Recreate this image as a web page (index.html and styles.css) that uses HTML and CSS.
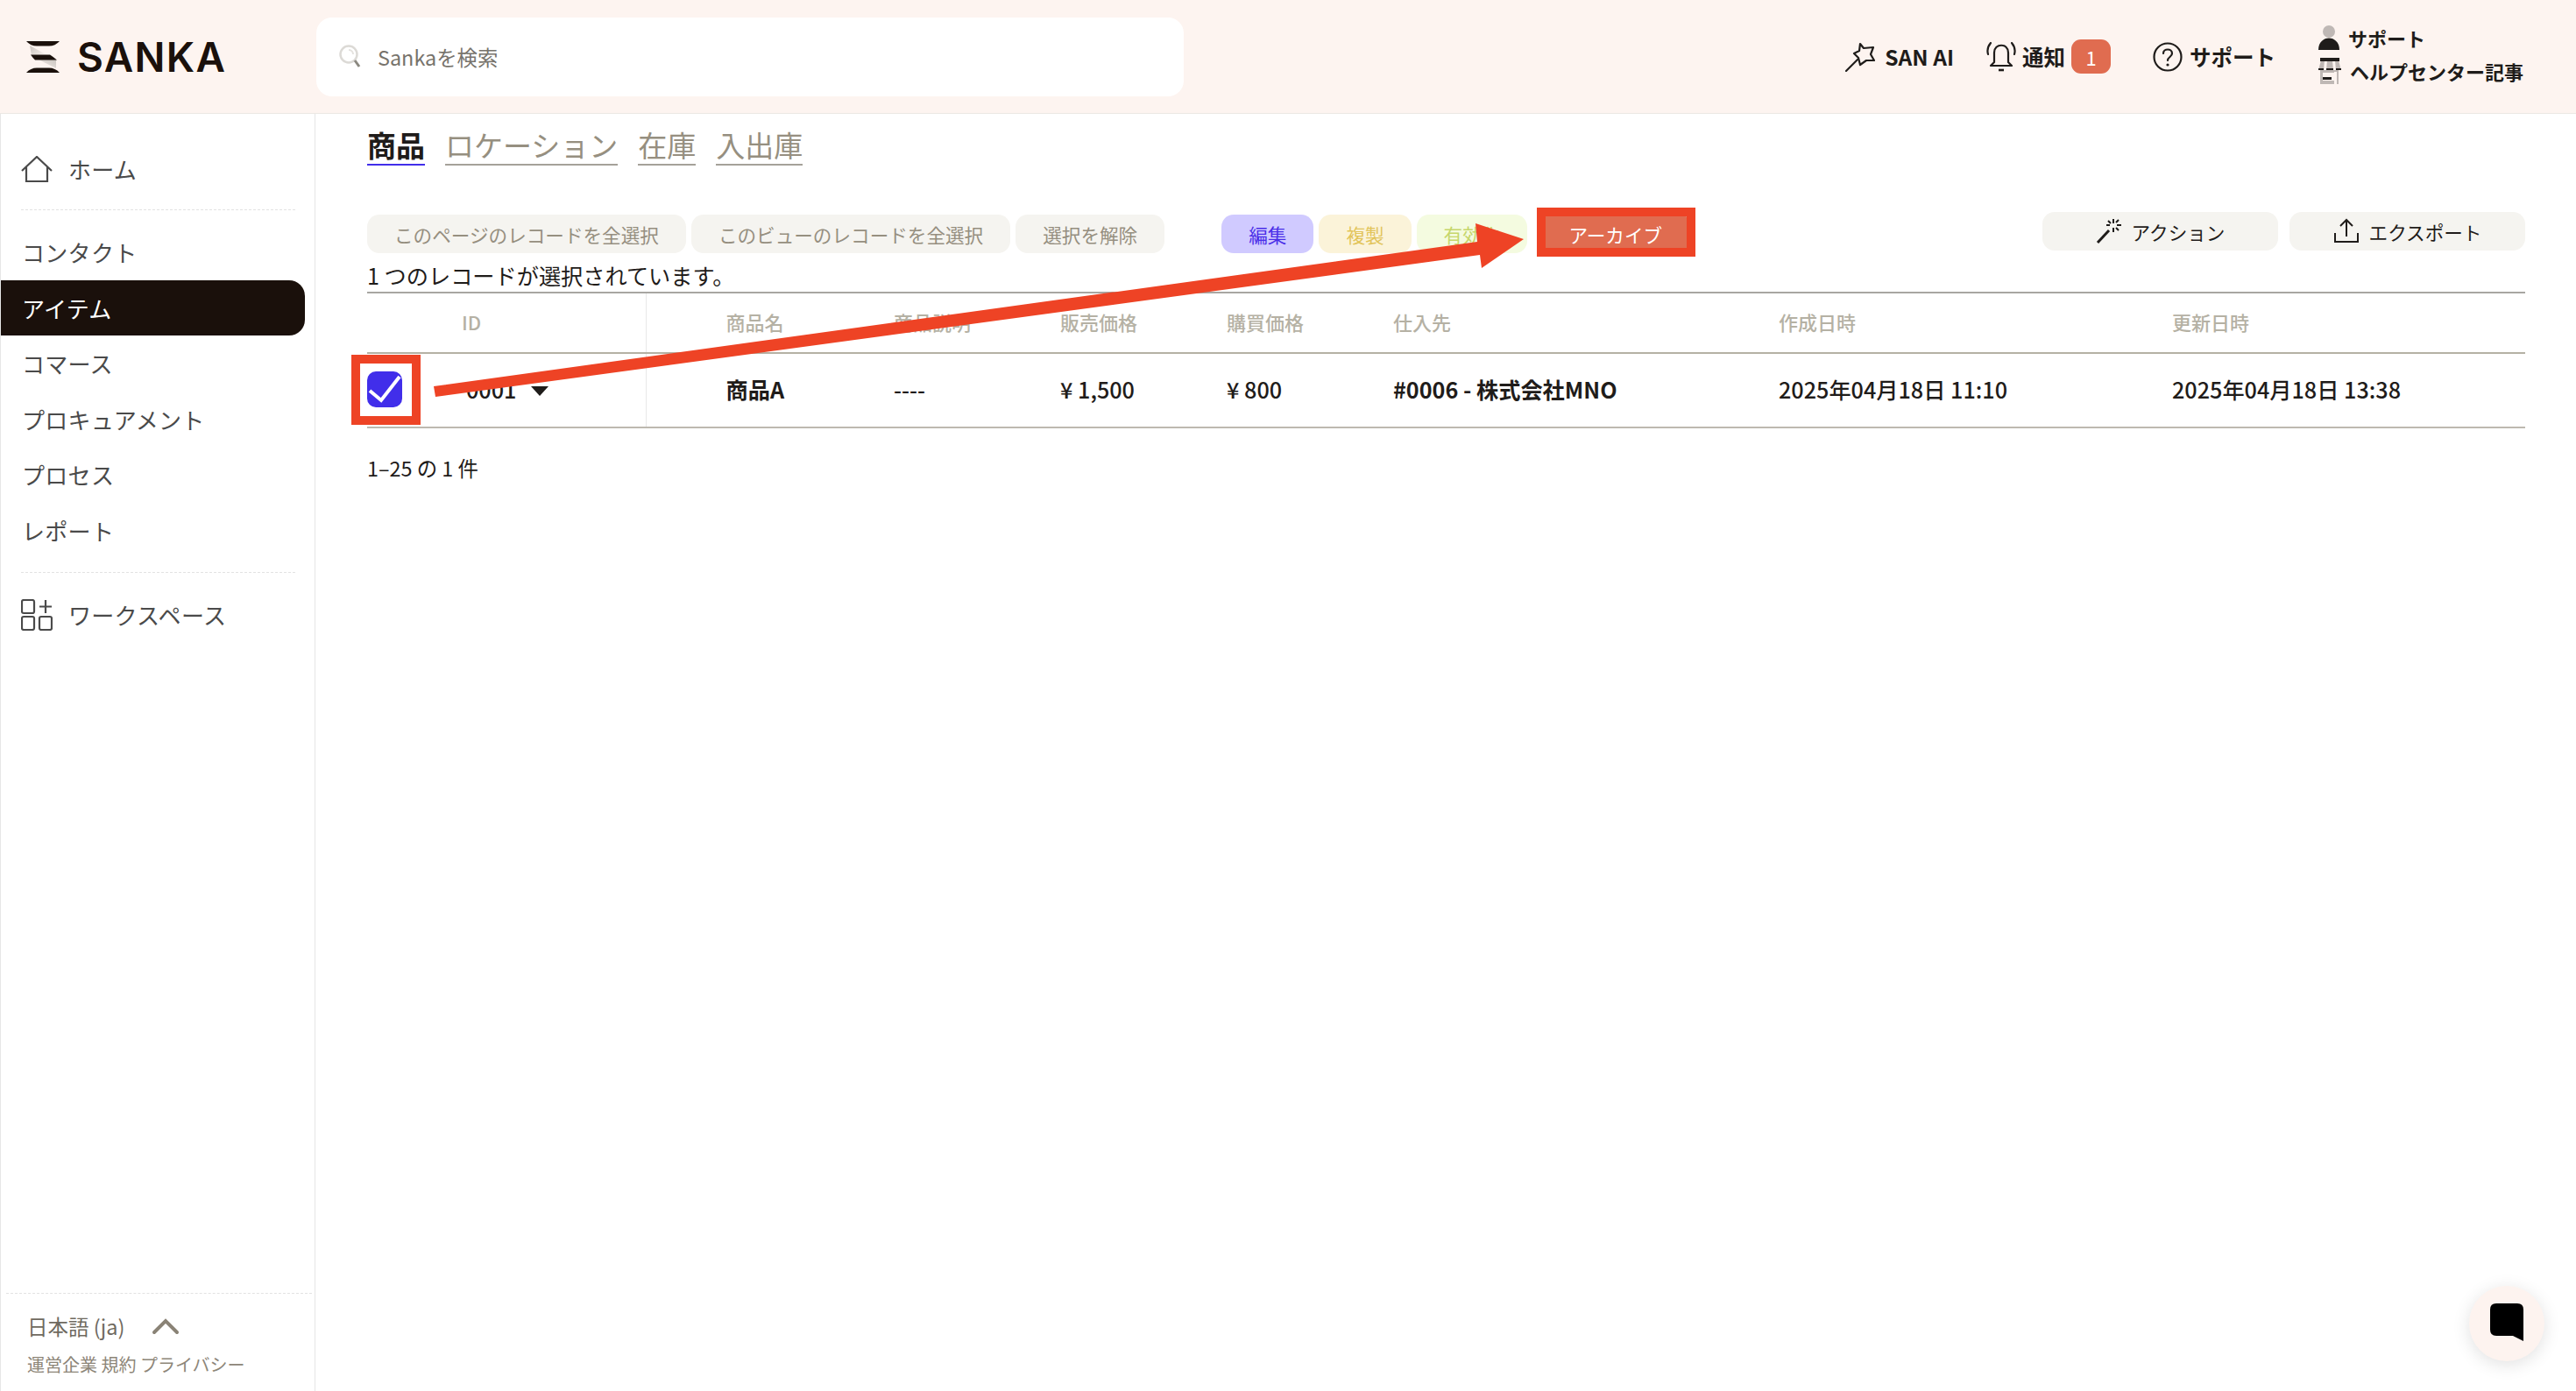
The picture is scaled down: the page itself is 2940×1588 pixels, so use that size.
FILE: index.html
```html
<!DOCTYPE html>
<html lang="ja">
<head>
    <meta charset="UTF-8">
    <meta name="viewport" content="width=device-width, initial-scale=1.0">
    <title>Sanka</title>
    <link rel="stylesheet" href="styles.css">
</head>
<body>
    <header class="topbar">
        <div class="brand">
            <svg class="brand-mark" width="38" height="36" viewBox="0 0 38 36">
                <defs>
                    <linearGradient id="fade" x1="0" y1="0" x2="1" y2="0.600">
                        <stop offset="0" stop-color="#c9c4bf"/>
                        <stop offset="1" stop-color="#f6eeea"/>
                    </linearGradient>
                    <linearGradient id="fade2" x1="1" y1="0" x2="0" y2="1">
                        <stop offset="0" stop-color="#c9c4bf"/>
                        <stop offset="1" stop-color="#f6eeea"/>
                    </linearGradient>
                </defs>
                <path d="M4 5 L24 16 H6 Z" fill="url(#fade)"/>
                <path d="M14 21 H34 L34 31 Z" fill="url(#fade2)"/>
                <path d="M0 0 H38 Q33 5.500 26 5.500 H12 Q5 5.500 0 0 Z" fill="#1a100b"/>
                <path d="M5 15.500 H27 Q31 18 35 21.500 H10 Q7 18.500 5 15.500 Z" fill="#1a100b"/>
                <path d="M12 30.500 H26 Q33 30.500 38 36 H0 Q5 30.500 12 30.500 Z" fill="#1a100b"/>
            </svg>
            <span class="brand-name">SANKA</span>
        </div>
        <div class="search">
            <svg width="26" height="28" viewBox="0 0 26 28" fill="none">
                <circle cx="11" cy="11" r="9.500" stroke="#dcdad6" stroke-width="2.500"/>
                <path d="M11 6 A5 5 0 0 1 16 11" stroke="#e4e2de" stroke-width="2"/>
                <path d="M18 18 L23 25" stroke="#8b8880" stroke-width="3"/>
            </svg>
            <span>Sankaを検索</span>
        </div>
        <nav class="top-links">
            <a class="top-link link-ai">
                <svg width="34" height="34" viewBox="0 0 34 34" fill="none" stroke="#1f1c1a" stroke-width="2.200" stroke-linejoin="round">
                    <path d="M17 2 L21 7 L32 6 L29 14 L33 21 L24 21 L17 26 L15 18 L10 13 L16 10 Z"/>
                    <path d="M14 20 L1 33" stroke-linecap="round"/>
                </svg>
                <span>SAN AI</span>
            </a>
            <a class="top-link link-bell">
                <svg width="34" height="34" viewBox="0 0 34 34" fill="none" stroke="#1f1c1a" stroke-width="2.200">
                    <path d="M9 23 V12 C9 1 25 1 25 12 V23 L29 27 H5 Z" stroke-linejoin="round"/>
                    <path d="M5 1 Q0 7 2 14 M29 1 Q34 7 32 14" stroke-linecap="round"/>
                    <path d="M14 32 H20" stroke-width="2.600"/>
                </svg>
                <span>通知</span>
                <span class="badge">1</span>
            </a>
            <a class="top-link link-help">
                <svg width="34" height="34" viewBox="0 0 34 34" fill="none" stroke="#1f1c1a" stroke-width="2.200">
                    <circle cx="17" cy="17" r="15.500"/>
                    <path d="M12 13 C12 7 22 7 22 13 C22 17 17 17 17 21" stroke-linecap="round"/>
                    <circle cx="17" cy="26" r="1.600" fill="#1f1c1a" stroke="none"/>
                </svg>
                <span>サポート</span>
            </a>
            <div class="top-stack">
                <a class="stack-row">
                    <svg width="26" height="28" viewBox="0 0 26 28">
                        <circle cx="13" cy="7" r="7" fill="#bfb8b5"/>
                        <path d="M1 28 C1 10 25 10 25 28 Z" fill="#1f1c1a"/>
                    </svg>
                    <span>サポート</span>
                </a>
                <a class="stack-row">
                    <svg width="28" height="30" viewBox="0 0 28 30">
                        <path d="M4 3 L1 14 H27 L24 3 Z M3 14 H24 V30 H3 Z" fill="#bfb8b5"/>
                        <path d="M6 17 H19 V26 H6 Z" fill="#fdf4f0"/>
                        <path d="M8 3 L7 14 H10 L11 3 Z M17 3 L18 14 H21 L20 3 Z M19 16 H22 V30 H19 Z" fill="#fdf4f0"/>
                        <path d="M3 0 H25 V4 H3 Z M1 12 H7 V14 H1 Z M10 12 H18 V14 H10 Z M21 12 H27 V14 H21 Z M6 22 H16 V25 H6 Z" fill="#1f1c1a"/>
                    </svg>
                    <span>ヘルプセンター記事</span>
                </a>
            </div>
        </nav>
    </header>

    <div class="layout">
        <aside class="sidebar">
            <a class="nav-main nav-home">
                <svg width="36" height="30" viewBox="0 0 36 30" fill="none" stroke="#4a4a4a" stroke-width="2.200">
                    <path d="M1 17 L18 1 L35 17"/>
                    <path d="M6 13 V29 H30 V13"/>
                </svg>
                <span>ホーム</span>
            </a>
            <div class="nav-line"></div>
            <ul class="nav-list">
                <li class="nav-item">コンタクト</li>
                <li class="nav-item active">アイテム</li>
                <li class="nav-item">コマース</li>
                <li class="nav-item">プロキュアメント</li>
                <li class="nav-item">プロセス</li>
                <li class="nav-item">レポート</li>
            </ul>
            <div class="nav-line"></div>
            <a class="nav-main nav-work">
                <svg width="36" height="36" viewBox="0 0 36 36" fill="none" stroke="#4a4a4a" stroke-width="2.200">
                    <rect x="1" y="1" width="14" height="15" rx="2"/>
                    <rect x="1" y="20" width="14" height="15" rx="2"/>
                    <rect x="21" y="20" width="14" height="15" rx="2"/>
                    <path d="M28 1 V16 M21 8.500 H35"/>
                </svg>
                <span>ワークスペース</span>
            </a>
            <div class="side-footer">
                <div class="lang">
                    <span>日本語 (ja)</span>
                    <svg width="32" height="20" viewBox="0 0 32 20" fill="none" stroke="#8a8376" stroke-width="4" stroke-linecap="round">
                        <path d="M3 17 L16 4 L29 17"/>
                    </svg>
                </div>
                <div class="legal">運営企業 規約 プライバシー</div>
            </div>
        </aside>

        <main class="content">
            <div class="tabs">
                <a class="tab current">商品</a>
                <a class="tab">ロケーション</a>
                <a class="tab">在庫</a>
                <a class="tab">入出庫</a>
            </div>

            <div class="toolbar">
                <div class="btn-group">
                    <button class="btn">このページのレコードを全選択</button>
                    <button class="btn">このビューのレコードを全選択</button>
                    <button class="btn">選択を解除</button>
                    <button class="btn btn-edit">編集</button>
                    <button class="btn btn-copy">複製</button>
                    <button class="btn btn-enable">有効化</button>
                    <button class="btn btn-archive">アーカイブ</button>
                </div>
                <div class="btn-right">
                    <button class="btn-tool">
                        <svg width="30" height="30" viewBox="0 0 30 30" fill="none" stroke="#1f1c1a" stroke-width="2">
                            <path d="M2 28 L15 14" stroke-width="3"/>
                            <path d="M20 1 V6 M20 11 V16 M12 8 H16 M24 8 H29 M14 3 L17 6 M26 2 L23 5 M26 14 L23 11"/>
                        </svg>
                        <span>アクション</span>
                    </button>
                    <button class="btn-tool">
                        <svg width="30" height="30" viewBox="0 0 30 30" fill="none" stroke="#1f1c1a" stroke-width="2">
                            <path d="M15 21 V2 M8 9 L15 2 L22 9"/>
                            <path d="M2 17 V27 H28 V17"/>
                        </svg>
                        <span>エクスポート</span>
                    </button>
                </div>
            </div>

            <div class="selected-note">1 つのレコードが選択されています。</div>

            <table class="records">
                <colgroup>
                    <col class="col-check">
                    <col class="col-id">
                    <col class="col-name">
                    <col class="col-price">
                    <col class="col-price">
                    <col class="col-price">
                    <col class="col-supplier">
                    <col class="col-date">
                    <col>
                </colgroup>
                <thead>
                    <tr>
                        <th></th>
                        <th class="cell-id">ID</th>
                        <th class="cell-name">商品名</th>
                        <th>商品説明</th>
                        <th>販売価格</th>
                        <th>購買価格</th>
                        <th>仕入先</th>
                        <th>作成日時</th>
                        <th>更新日時</th>
                    </tr>
                </thead>
                <tbody>
                    <tr>
                        <td><span class="check"><svg width="40" height="41" viewBox="0 0 40 41" fill="none" stroke="#fff" stroke-width="4"><path d="M3 22 L16 33 L37 6"/></svg></span></td>
                        <td class="cell-id cell-code">0001 <span class="caret"></span></td>
                        <td class="cell-name strong">商品A</td>
                        <td>----</td>
                        <td>¥ 1,500</td>
                        <td>¥ 800</td>
                        <td class="strong">#0006 - 株式会社MNO</td>
                        <td>2025年04月18日 11:10</td>
                        <td>2025年04月18日 13:38</td>
                    </tr>
                </tbody>
            </table>

            <div class="pager">1–25 の 1 件</div>
        </main>
    </div>

    <!-- annotations drawn on top of the screenshot -->
    <div class="mark mark-check"></div>
    <div class="mark mark-archive"></div>
    <svg class="arrow" width="2940" height="1588" viewBox="0 0 2940 1588">
        <path d="M495 441 L1686 276 L1684 255 L1739 273 L1691 306 L1689 291 L497 453 Z" fill="#ee4325"/>
    </svg>

    <button class="chat">
        <svg width="38" height="44" viewBox="0 0 38 44">
            <path d="M7 0 H31 Q38 0 38 7 V43 L26 37 H7 Q0 37 0 30 V7 Q0 0 7 0 Z" fill="#000"/>
        </svg>
    </button>
</body>
</html>
```

FILE: styles.css
```css
* {
    box-sizing: border-box;
}
body {
    margin: 0;
    height: 1588px;
    overflow: hidden;
    background: #ffffff;
    color: #1f1c1a;
    font-family: "Noto Sans CJK JP", "Noto Sans", sans-serif;
}
ul {
    list-style: none;
    margin: 0;
    padding: 0;
}
button {
    font-family: inherit;
    border: none;
}

/* top bar */
.topbar {
    display: flex;
    align-items: center;
    height: 130px;
    padding: 0 60px 0 30px;
    background: #fdf4f0;
    border-bottom: 1px solid #ece8e4;
}
.brand {
    display: flex;
    align-items: center;
    gap: 20px;
    width: 331px;
}
.brand-name {
    font-family: Inter, sans-serif;
    font-size: 46px;
    font-weight: 600;
    letter-spacing: 1.300px;
    color: #1a100b;
}
.search {
    display: flex;
    align-items: center;
    gap: 18px;
    width: 990px;
    height: 90px;
    padding-left: 26px;
    background: #ffffff;
    border-radius: 18px;
    font-size: 23.400px;
    color: #77736c;
}
.top-links {
    display: flex;
    align-items: center;
    margin-left: auto;
    font-size: 24.500px;
    font-weight: 700;
}
.top-link {
    display: flex;
    align-items: center;
}
.link-ai {
    gap: 11px;
}
.link-bell {
    gap: 7px;
    margin-left: 37px;
}
.link-help {
    gap: 8px;
    margin-left: 48px;
}
.badge {
    display: flex;
    align-items: center;
    justify-content: center;
    width: 45px;
    height: 39px;
    border-radius: 11px;
    background: #e06c50;
    color: #ffffff;
    font-size: 22px;
    font-weight: 400;
}
.top-stack {
    display: flex;
    flex-direction: column;
    gap: 8px;
    margin: -6px 0 0 48px;
    font-size: 22px;
}
.stack-row {
    display: flex;
    align-items: center;
    gap: 9px;
    height: 30px;
}

/* sidebar */
.layout {
    display: flex;
    height: 1458px;
}
.sidebar {
    display: flex;
    flex-direction: column;
    width: 360px;
    flex-shrink: 0;
    border-left: 1px solid #e6e6e6;
    border-right: 1px solid #e6e6e6;
    color: #4a4a4a;
    font-size: 26px;
    letter-spacing: 0.300px;
}
.nav-main {
    display: flex;
    align-items: center;
    gap: 18px;
    padding-left: 23px;
}
.nav-home {
    height: 109px;
    padding-top: 16px;
}
.nav-work {
    height: 95px;
}
.nav-line {
    height: 1px;
    margin: 0 22px 0 23px;
    border-top: 1px dashed #e2e2e2;
}
.nav-list {
    padding: 16px 0 16px;
}
.nav-item {
    display: flex;
    align-items: center;
    height: 63.500px;
    padding-left: 24px;
    margin-right: 11px;
}
.nav-item.active {
    background: #1a100b;
    color: #ffffff;
    border-radius: 0 18px 18px 0;
}
.side-footer {
    margin: auto 3px 0 6px;
    height: 112px;
    border-top: 1px dashed #e2e2e2;
    padding: 18px 0 0 24px;
    letter-spacing: 0;
}
.lang {
    display: flex;
    align-items: center;
    gap: 31px;
    height: 38px;
    font-size: 23.500px;
    color: #6f6a60;
}
.legal {
    margin-top: 9px;
    line-height: 32px;
    font-size: 20px;
    color: #8d8678;
}

/* main area */
.content {
    flex: 1;
    padding: 16px 58px 0 59px;
}
.tabs {
    display: flex;
    gap: 23px;
    font-size: 33px;
    line-height: 39px;
}
.tab {
    padding-bottom: 2px;
    color: #968f80;
    border-bottom: 2px solid #a5a199;
}
.tab.current {
    color: #1f1c1a;
    font-weight: 700;
    border-bottom-color: #412eea;
}
.toolbar {
    display: flex;
    justify-content: space-between;
    margin-top: 53px;
    height: 60px;
}
.btn-group {
    display: flex;
    gap: 6px;
    margin-top: 3px;
}
.btn {
    height: 44px;
    padding: 0 31px;
    background: #f5f4f0;
    border-radius: 14px;
    color: #968f80;
    font-size: 21.600px;
}
.btn-edit {
    margin-left: 59px;
    background: #d0caff;
    color: #4a2fe8;
}
.btn-copy {
    background: #fbf3d9;
    color: #e2c45a;
}
.btn-enable {
    background: #f4fbe0;
    color: #c6d66a;
}
.btn-archive {
    margin-left: 7px;
    padding: 0 34px;
    background: #e06c50;
    color: #ffffff;
}
.btn-right {
    display: flex;
    gap: 13px;
}
.btn-tool {
    display: flex;
    align-items: center;
    justify-content: center;
    gap: 11px;
    width: 269px;
    height: 44px;
    background: #f5f4f0;
    border-radius: 14px;
    color: #1f1c1a;
    font-size: 21.600px;
}
.selected-note {
    height: 31px;
    line-height: 25px;
    font-size: 25.200px;
}
.records {
    width: 100%;
    table-layout: fixed;
    border-collapse: collapse;
    font-size: 25.200px;
}
.col-check {
    width: 108px;
}
.col-id {
    width: 210px;
}
.col-name {
    width: 283px;
}
.col-price {
    width: 190px;
}
.col-supplier {
    width: 440px;
}
.col-date {
    width: 449px;
}
.records th {
    height: 69px;
    padding: 0 0 4px;
    text-align: left;
    font-size: 22px;
    font-weight: 500;
    color: #b5b1a4;
    border-top: 2px solid #a8a6a2;
    border-bottom: 2px solid #b5b1a4;
}
.records td {
    height: 85px;
    padding: 0 0 3px;
    font-weight: 500;
    border-bottom: 2px solid #bdb9b0;
}
.records .cell-id {
    border-right: 1px solid #e8e8e8;
}
.records .cell-name {
    padding-left: 91px;
}
.records .strong {
    font-weight: 700;
}
.records .cell-code {
    padding-left: 5px;
}
.check {
    display: block;
    width: 40px;
    height: 41px;
    background: #412eea;
    border-radius: 10px;
}
.check svg {
    display: block;
}
.caret {
    display: inline-block;
    margin-left: 11px;
    vertical-align: 3px;
    border-left: 10px solid transparent;
    border-right: 10px solid transparent;
    border-top: 11px solid #1f1c1a;
}
.pager {
    margin-top: 29px;
    line-height: 32px;
    font-size: 23.400px;
}

/* annotations */
.mark {
    position: absolute;
    border: 10px solid #ee4325;
}
.mark-check {
    left: 401px;
    top: 405px;
    width: 79px;
    height: 80px;
}
.mark-archive {
    left: 1754px;
    top: 237px;
    width: 181px;
    height: 56px;
}
.arrow {
    position: absolute;
    left: 0;
    top: 0;
    pointer-events: none;
}
.chat {
    position: fixed;
    left: 2818px;
    top: 1468px;
    width: 86px;
    height: 86px;
    padding: 2px 0 0;
    background: #fdf3ef;
    border-radius: 50%;
    box-shadow: 0 4px 20px rgba(0, 0, 0, 0.12);
}
```
